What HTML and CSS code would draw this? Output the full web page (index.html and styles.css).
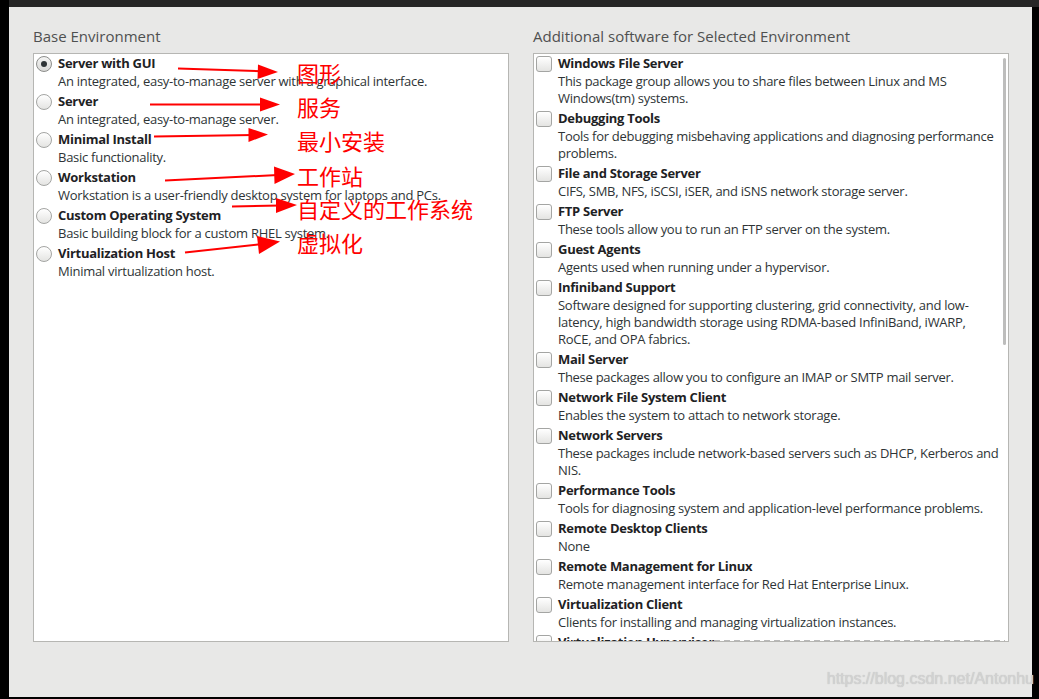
FILE: index.html
```html
<!DOCTYPE html>
<html lang="en">
<head>
  <meta charset="UTF-8">
  <title>Software Selection</title>
  <link rel="stylesheet" href="styles.css">
</head>
<body>
  <div class="screen">
    <div class="topbar"></div>
    <div class="main">
      <!-- Base environment -->
      <div class="column">
        <h3 class="heading">Base Environment</h3>
        <div class="listbox">
          <div class="item">
            <span class="radio checked"></span>
            <div class="text">
              <div class="title">Server with GUI</div>
              <div class="desc">An integrated, easy-to-manage server with a graphical interface.</div>
            </div>
          </div>
          <div class="item">
            <span class="radio"></span>
            <div class="text">
              <div class="title">Server</div>
              <div class="desc">An integrated, easy-to-manage server.</div>
            </div>
          </div>
          <div class="item">
            <span class="radio"></span>
            <div class="text">
              <div class="title">Minimal Install</div>
              <div class="desc">Basic functionality.</div>
            </div>
          </div>
          <div class="item">
            <span class="radio"></span>
            <div class="text">
              <div class="title">Workstation</div>
              <div class="desc">Workstation is a user-friendly desktop system for laptops and PCs.</div>
            </div>
          </div>
          <div class="item">
            <span class="radio"></span>
            <div class="text">
              <div class="title">Custom Operating System</div>
              <div class="desc">Basic building block for a custom RHEL system.</div>
            </div>
          </div>
          <div class="item">
            <span class="radio"></span>
            <div class="text">
              <div class="title">Virtualization Host</div>
              <div class="desc">Minimal virtualization host.</div>
            </div>
          </div>
        </div>
      </div>

      <!-- Add-ons -->
      <div class="column">
        <h3 class="heading">Additional software for Selected Environment</h3>
        <div class="listbox addons">
          <div class="item">
            <span class="check"></span>
            <div class="text">
              <div class="title">Windows File Server</div>
              <div class="desc">This package group allows you to share files between Linux and MS<br>Windows(tm) systems.</div>
            </div>
          </div>
          <div class="item">
            <span class="check"></span>
            <div class="text">
              <div class="title">Debugging Tools</div>
              <div class="desc">Tools for debugging misbehaving applications and diagnosing performance<br>problems.</div>
            </div>
          </div>
          <div class="item">
            <span class="check"></span>
            <div class="text">
              <div class="title">File and Storage Server</div>
              <div class="desc">CIFS, SMB, NFS, iSCSI, iSER, and iSNS network storage server.</div>
            </div>
          </div>
          <div class="item">
            <span class="check"></span>
            <div class="text">
              <div class="title">FTP Server</div>
              <div class="desc">These tools allow you to run an FTP server on the system.</div>
            </div>
          </div>
          <div class="item">
            <span class="check"></span>
            <div class="text">
              <div class="title">Guest Agents</div>
              <div class="desc">Agents used when running under a hypervisor.</div>
            </div>
          </div>
          <div class="item">
            <span class="check"></span>
            <div class="text">
              <div class="title">Infiniband Support</div>
              <div class="desc">Software designed for supporting clustering, grid connectivity, and low-<br>latency, high bandwidth storage using RDMA-based InfiniBand, iWARP,<br>RoCE, and OPA fabrics.</div>
            </div>
          </div>
          <div class="item">
            <span class="check"></span>
            <div class="text">
              <div class="title">Mail Server</div>
              <div class="desc">These packages allow you to configure an IMAP or SMTP mail server.</div>
            </div>
          </div>
          <div class="item">
            <span class="check"></span>
            <div class="text">
              <div class="title">Network File System Client</div>
              <div class="desc">Enables the system to attach to network storage.</div>
            </div>
          </div>
          <div class="item">
            <span class="check"></span>
            <div class="text">
              <div class="title">Network Servers</div>
              <div class="desc">These packages include network-based servers such as DHCP, Kerberos and<br>NIS.</div>
            </div>
          </div>
          <div class="item">
            <span class="check"></span>
            <div class="text">
              <div class="title">Performance Tools</div>
              <div class="desc">Tools for diagnosing system and application-level performance problems.</div>
            </div>
          </div>
          <div class="item">
            <span class="check"></span>
            <div class="text">
              <div class="title">Remote Desktop Clients</div>
              <div class="desc">None</div>
            </div>
          </div>
          <div class="item">
            <span class="check"></span>
            <div class="text">
              <div class="title">Remote Management for Linux</div>
              <div class="desc">Remote management interface for Red Hat Enterprise Linux.</div>
            </div>
          </div>
          <div class="item">
            <span class="check"></span>
            <div class="text">
              <div class="title">Virtualization Client</div>
              <div class="desc">Clients for installing and managing virtualization instances.</div>
            </div>
          </div>
          <div class="item">
            <span class="check"></span>
            <div class="text">
              <div class="title">Virtualization Hypervisor</div>
              <div class="desc">Smallest possible virtualization host installation.</div>
            </div>
          </div>
          <div class="scrollbar"></div>
          <div class="undershoot"></div>
        </div>
      </div>
    </div>
  </div>

  <!-- annotations drawn over the screenshot -->
  <svg class="annotations" width="1039" height="699" viewBox="0 0 1039 699">
    <g stroke="#ff0000" stroke-width="2">
      <line x1="178" y1="68.5" x2="262" y2="71.3"/>
      <line x1="150" y1="104.5" x2="264" y2="104.5"/>
      <line x1="154" y1="136.5" x2="254" y2="135"/>
      <line x1="165" y1="180.5" x2="278" y2="175"/>
      <line x1="232" y1="206.5" x2="280" y2="205.5"/>
      <line x1="185" y1="252.5" x2="262" y2="244"/>
    </g>
    <g fill="#ff0000">
      <polygon points="278,72 258,64.5 257.5,79"/>
      <polygon points="280,104.5 260,97.5 260,111.5"/>
      <polygon points="268,134.5 248.5,128 248.5,142"/>
      <polygon points="295,174 274,166.5 274.5,184"/>
      <polygon points="297,205 276,198 276,213"/>
      <polygon points="280,241.5 257,236 259,254"/>
    </g>
    <g class="note" fill="#ff0000" dominant-baseline="central">
      <text x="297" y="71.5">图形</text>
      <text x="297" y="106">服务</text>
      <text x="297" y="140">最小安装</text>
      <text x="297" y="175">工作站</text>
      <text x="297" y="207.5">自定义的工作系统</text>
      <text x="297" y="242">虚拟化</text>
    </g>
  </svg>
  <div class="watermark">https://blog.csdn.net/Antonhu</div>
</body>
</html>
```

FILE: styles.css
```css
/* base */
* { box-sizing: border-box; }
body {
  margin: 0; width: 1039px; height: 699px; overflow: hidden;
  background: #000; position: relative;
  font-family: 'Open Sans', 'Noto Sans', sans-serif; color: #2e3436;
}
.screen { height: 697px; padding-left: 9px; display: flex; flex-direction: column; }
.topbar { height: 7px; background: #262626; flex: none; }
.main {
  flex: 1; margin-right: 7px; background: #e8e8e7;
  display: flex; gap: 24px; padding: 19px 23px 0 24px;
}
.column { width: 476px; }
.heading {
  margin: 0 0 7px; font-size: 15px; line-height: 20px;
  font-weight: normal; color: #4f5050;
}

/* lists */
.listbox {
  height: 589px; background: #fff; border: 1px solid #b6b6b3;
  padding: 1px 0 0 2px; overflow: hidden; position: relative;
}
.item { display: flex; align-items: flex-start; margin-bottom: 4px; }
.text { font-size: 13px; line-height: 17px; letter-spacing: -0.27px; white-space: nowrap; }
.title { font-weight: 700; color: #1e2224; }
.desc { color: #2e3436; padding-top: 1px; margin-bottom: -1px; }

.radio, .check {
  flex: none; width: 16px; height: 16px; margin: 1px 6px 0 0;
  border: 1px solid #a4a5a3; position: relative;
  background: linear-gradient(#ffffff, #e4e4e2);
}
.radio { border-radius: 50%; }
.radio.checked { border-color: #8c8d8b; background: linear-gradient(#f4f4f3, #d9d9d7); }
.radio.checked::after {
  content: ""; position: absolute; left: 4px; top: 4px;
  width: 6px; height: 6px; border-radius: 50%; background: #2e3436;
}
.check { border-radius: 3px; }

/* overlay scrollbar + bottom undershoot */
.scrollbar {
  position: absolute; right: 2px; top: 4px;
  width: 3px; height: 287px; border-radius: 2px; background: #bdbdbc;
}
.undershoot {
  position: absolute; left: 180px; right: 3px; bottom: 0; height: 1px;
  background: repeating-linear-gradient(90deg, #b8b8b8 0 6px, transparent 6px 10px);
}

/* annotations */
.annotations { position: absolute; left: 0; top: 0; pointer-events: none; }
.note { font-family: 'Noto Sans CJK SC', sans-serif; font-size: 22px; }
.watermark {
  position: absolute; right: 5px; top: 670px;
  font-family: 'Liberation Sans', sans-serif; font-size: 16px;
  color: #d2d2d2; text-shadow: 0 0 1px #bbb;
}
```
